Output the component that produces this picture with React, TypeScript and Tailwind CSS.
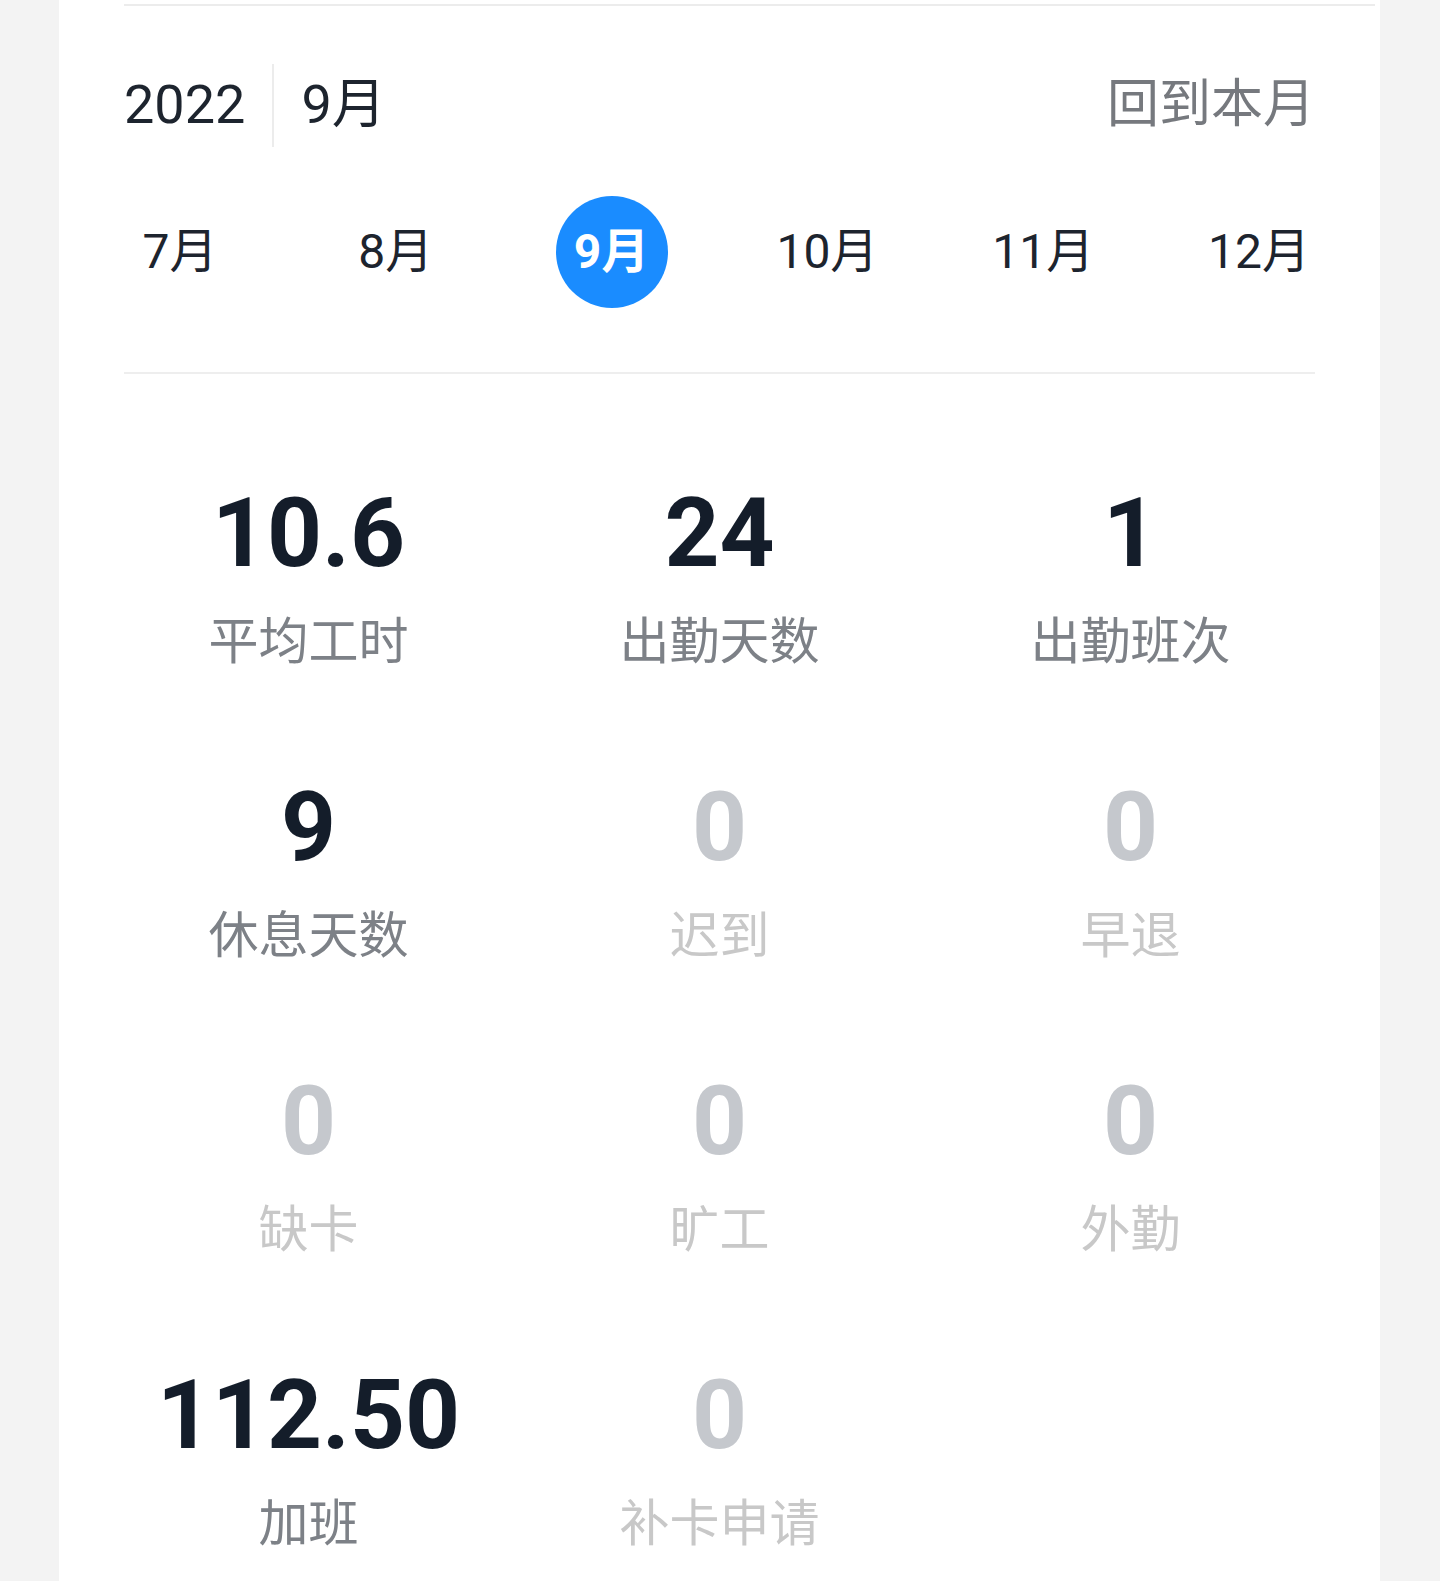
const months = ["7月", "8月", "9月", "10月", "11月", "12月"];

type Stat = { value: string; label: string; muted?: boolean };

const stats: Stat[] = [
  { value: "10.6", label: "平均工时" },
  { value: "24", label: "出勤天数" },
  { value: "1", label: "出勤班次" },
  { value: "9", label: "休息天数" },
  { value: "0", label: "迟到", muted: true },
  { value: "0", label: "早退", muted: true },
  { value: "0", label: "缺卡", muted: true },
  { value: "0", label: "旷工", muted: true },
  { value: "0", label: "外勤", muted: true },
  { value: "112.50", label: "加班" },
  { value: "0", label: "补卡申请", muted: true },
];

export default function App() {
  return (
    <div
      className="min-h-[1581px] bg-[#f3f3f3] pl-[59px] pr-[60px]"
      style={{ fontFamily: 'Roboto, "Noto Sans CJK SC", sans-serif' }}
    >
      <div className="min-h-[1581px] bg-white pt-[4px]">
        {/* top rule */}
        <div className="ml-[65px] mr-[5px] h-[2px] bg-[#ececec]" />

        {/* year / month header */}
        <div className="flex h-[190px] items-center px-[65px] pt-[8px]">
          <span className="text-[54px] leading-none text-[#1d242e]">2022</span>
          <span className="mx-[27px] h-[83px] w-[2px] bg-[#ececec]" />
          <span className="text-[54px] leading-none text-[#1d242e]">9月</span>
          <button className="ml-auto text-[52px] leading-none text-[#76797e]">回到本月</button>
        </div>

        {/* month picker */}
        <div className="flex h-[112px] items-center justify-between px-[65px]">
          {months.map((m) =>
            m === "9月" ? (
              <div
                key={m}
                className="flex h-[112px] w-[112px] items-center justify-center rounded-full bg-[#1a8cff] text-[48px] font-bold leading-none text-white"
              >
                {m}
              </div>
            ) : (
              <div key={m} className="w-[112px] text-center text-[48px] leading-none text-[#1d242e]">
                {m}
              </div>
            )
          )}
        </div>

        <div className="mx-[65px] mt-[64px] h-[2px] bg-[#eeeeee]" />

        {/* statistics */}
        <div className="mt-[111px] grid grid-cols-3 gap-y-[112px] px-[44px]">
          {stats.map((s) => (
            <div key={s.label} className="flex flex-col items-center">
              <span
                className={`text-[96px] font-bold leading-none ${
                  s.muted ? "text-[#c5c8cd]" : "text-[#141d2a]"
                }`}
              >
                {s.value}
              </span>
              <span
                className={`mt-[36px] text-[50px] leading-none ${
                  s.muted ? "text-[#c8c8c8]" : "text-[#7d8187]"
                }`}
              >
                {s.label}
              </span>
            </div>
          ))}
        </div>
      </div>
    </div>
  );
}
